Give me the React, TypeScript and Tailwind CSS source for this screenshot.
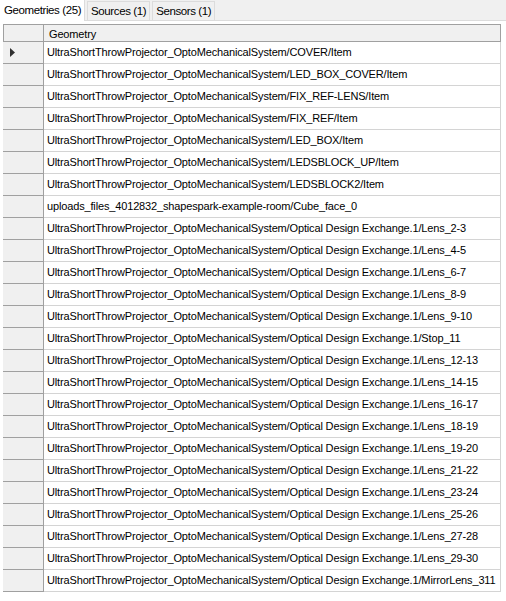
import React from 'react';

const base = 'UltraShortThrowProjector_OptoMechanicalSystem';
const ode = `${base}/Optical Design Exchange.1`;

const geometries = [
  `${base}/COVER/Item`,
  `${base}/LED_BOX_COVER/Item`,
  `${base}/FIX_REF-LENS/Item`,
  `${base}/FIX_REF/Item`,
  `${base}/LED_BOX/Item`,
  `${base}/LEDSBLOCK_UP/Item`,
  `${base}/LEDSBLOCK2/Item`,
  'uploads_files_4012832_shapespark-example-room/Cube_face_0',
  `${ode}/Lens_2-3`,
  `${ode}/Lens_4-5`,
  `${ode}/Lens_6-7`,
  `${ode}/Lens_8-9`,
  `${ode}/Lens_9-10`,
  `${ode}/Stop_11`,
  `${ode}/Lens_12-13`,
  `${ode}/Lens_14-15`,
  `${ode}/Lens_16-17`,
  `${ode}/Lens_18-19`,
  `${ode}/Lens_19-20`,
  `${ode}/Lens_21-22`,
  `${ode}/Lens_23-24`,
  `${ode}/Lens_25-26`,
  `${ode}/Lens_27-28`,
  `${ode}/Lens_29-30`,
  `${ode}/MirrorLens_311`,
];

const tabs = ['Geometries (25)', 'Sources (1)', 'Sensors (1)'];

const App = () => {
  return (
    <div className="w-[506px] h-[601px] bg-white overflow-hidden font-['Liberation_Sans',sans-serif] text-[11px] tracking-[-0.15px] text-black">
      {/* tab strip */}
      <div className="flex h-[21px] bg-[#f0f0f0] border-b border-[#dcdcdc] text-[11.5px] tracking-[-0.4px]">
        {tabs.map((t, i) =>
          i === 0 ? (
            <div key={t} className="h-[21px] -mb-px pl-[4px] pr-[3px] pt-[2px] bg-white border-r border-[#dcdcdc]">
              {t}
            </div>
          ) : (
            <div
              key={t}
              className="h-[19px] mt-[1px] ml-[2px] px-[3px] pt-[1px] bg-[#f0f0f0] border border-b-0 border-[#dcdcdc]"
            >
              {t}
            </div>
          )
        )}
      </div>

      {/* data grid */}
      <div className="ml-[3px] mt-[3px] w-[498px]">
        <div className="flex h-[18px] bg-[#f0f0f0] border border-[#a0a0a0]">
          <div className="w-[40px] border-r border-[#a0a0a0]" />
          <div className="flex-1 pl-[5px] pt-[1px]">Geometry</div>
        </div>
        {geometries.map((g, i) => (
          <div key={i} className="flex h-[22px]">
            <div className="w-[41px] bg-[#f0f0f0] border-r border-b border-[#a0a0a0] flex items-center pl-[7px]">
              {i === 0 && (
                <svg width="5" height="9" viewBox="0 0 5 9">
                  <path d="M0 0 L5 4.5 L0 9 Z" fill="#303030" />
                </svg>
              )}
            </div>
            <div className="flex-1 border-r border-b border-[#d4d4d4] pl-[3px] flex items-center whitespace-nowrap overflow-hidden">
              {g}
            </div>
          </div>
        ))}
      </div>
    </div>
  );
};

export default App;
